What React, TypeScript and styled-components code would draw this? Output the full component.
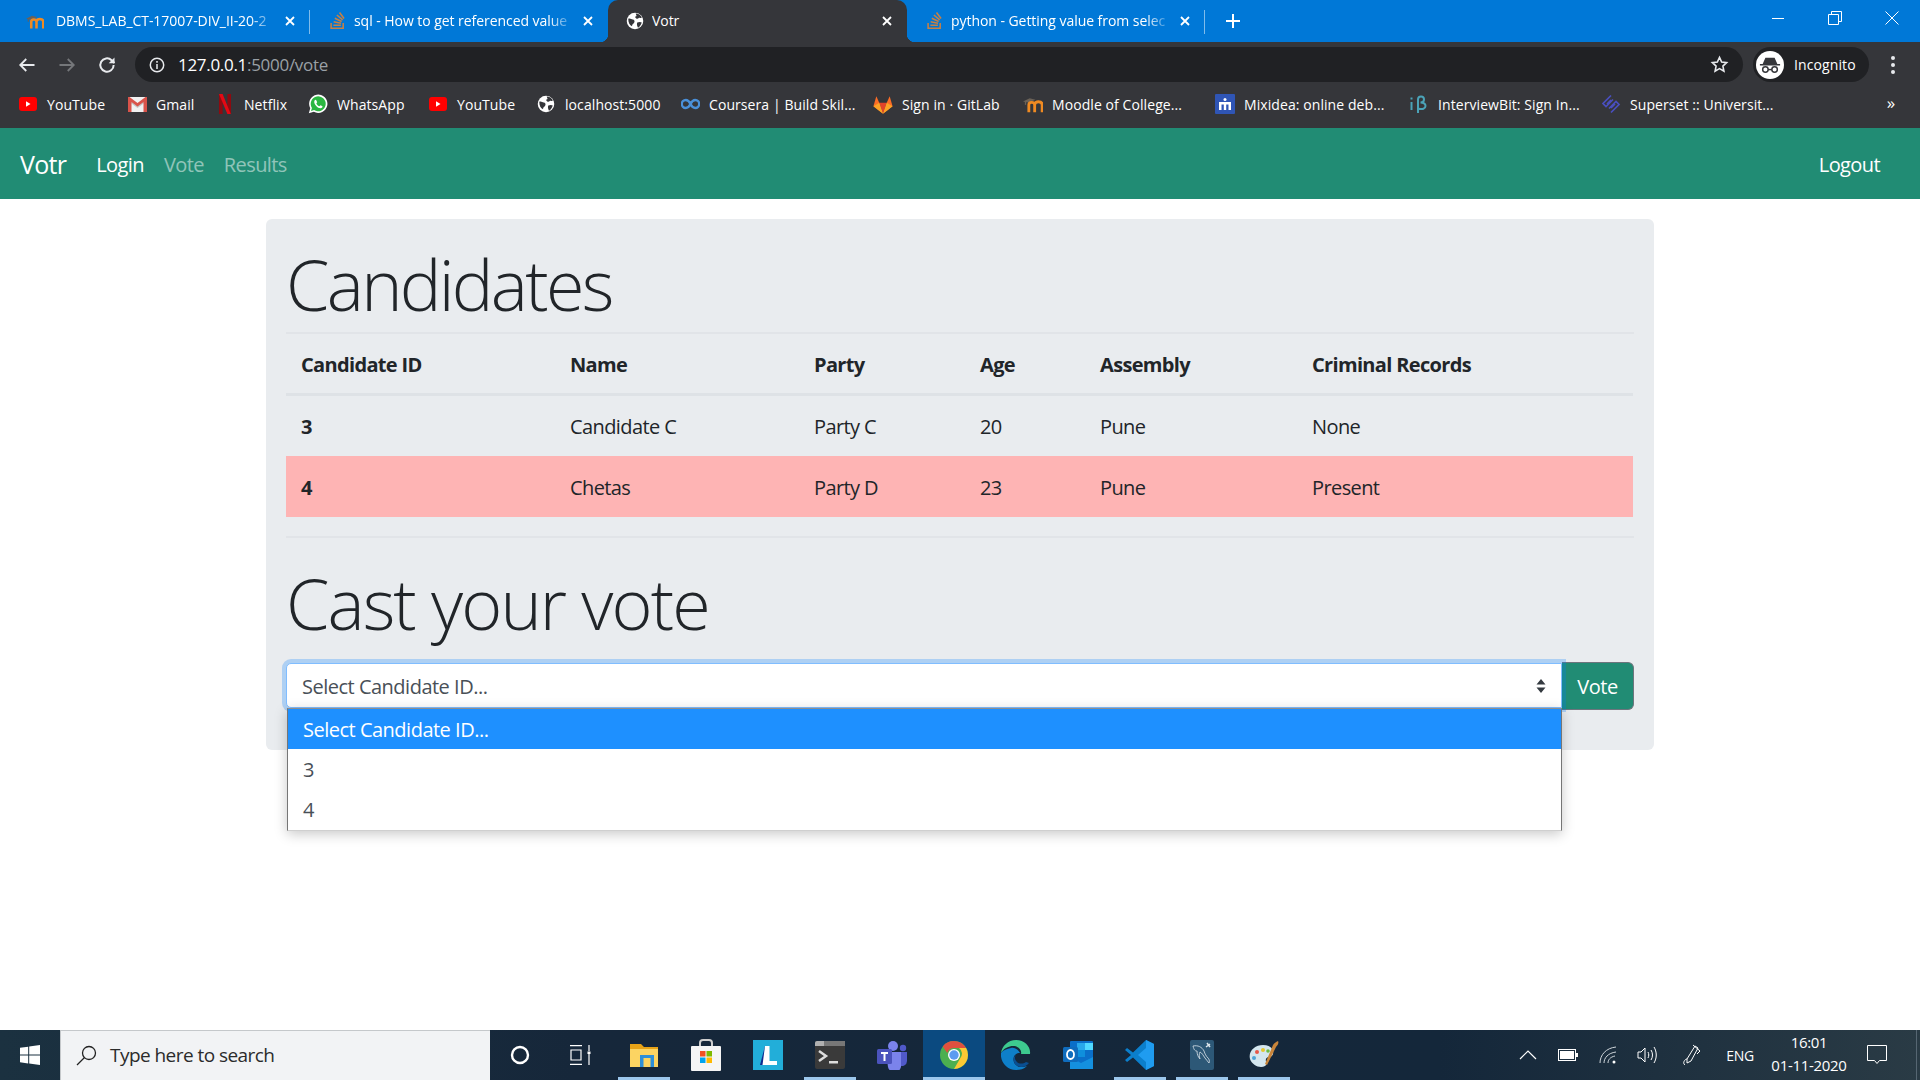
import React from "react";
import styled, { createGlobalStyle } from "styled-components";
import { SiStackoverflow } from "react-icons/si";

const Global = createGlobalStyle`
  html, body { margin: 0; padding: 0; height: 100%; background: #fff; overflow: hidden; }
  * { box-sizing: border-box; }
  body { font-family: "Open Sans", "Noto Sans", "Liberation Sans", sans-serif; }
`;

const Page = styled.div`
  width: 1920px; height: 1080px; display: flex; flex-direction: column; overflow: hidden;
`;
const TitleBar = styled.div`
  height: 42px; background: #0078d7; display: flex; align-items: stretch; padding-left: 12px; color: #fff; flex: none;
`;
const Tab = styled.div<{ $active?: boolean; $sep?: boolean }>`
  width: ${p => (p.$active ? 299 : 298)}px; position: relative; display: flex; align-items: center; gap: 8px;
  padding: 0 12px 1px 18px; font-size: 14px; letter-spacing: -0.05px; color: #fff; flex: none;
  background: ${p => (p.$active ? "#35363a" : "transparent")};
  border-radius: ${p => (p.$active ? "10px 10px 0 0" : "0")};
  ${p => p.$sep && `&::after { content: ""; position: absolute; right: 0; top: 10px; bottom: 8px; width: 1px; background: rgba(255,255,255,.5); }`}
  ${p => p.$active && `
    &::before, &::after { content: ""; position: absolute; bottom: 0; width: 8px; height: 8px; }
    &::before { left: -8px; background: radial-gradient(circle at 0 0, transparent 8px, #35363a 8.5px); }
    &::after { right: -8px; background: radial-gradient(circle at 100% 0, transparent 8px, #35363a 8.5px); }
  `}
`;
const TabIcon = styled.span<{ $nudge?: number }>`
  width: 18px; height: 18px; flex: none; display: flex; align-items: center; justify-content: center;
  ${p => p.$nudge && `transform: translateX(${p.$nudge}px);`}
`;
const TabTitle = styled.span<{ $fade?: boolean }>`
  flex: 1; min-width: 0; white-space: nowrap; overflow: hidden;
  ${p => p.$fade && `mask-image: linear-gradient(to right, #000 88%, transparent 100%);`}
`;
const CloseGlyph = styled.svg`
  width: 10px; height: 10px; flex: none; margin-right: 3px; stroke: #fff; stroke-width: 1.8; fill: none;
`;
const NewTab = styled.div`
  width: 56px; display: flex; align-items: center; justify-content: center;
`;
const WindowControls = styled.div`
  margin-left: auto; display: flex; align-items: flex-start;
`;
const WinButton = styled.div`
  width: 57px; height: 36px; display: flex; align-items: center; justify-content: center;
  svg { stroke: #fff; fill: none; stroke-width: 1; }
`;

const Toolbar = styled.div`
  height: 45px; background: #35363a; display: flex; align-items: flex-start; padding: 5px 0 0 0; flex: none;
`;
const NavIcon = styled.div`
  width: 40px; height: 35px; display: flex; align-items: center; justify-content: center; flex: none;
`;
const NavGroup = styled.div`
  display: flex; padding-left: 7px; width: 135px;
`;
const Omnibox = styled.div`
  width: 1608px; height: 35px; background: #202124; border-radius: 18px; display: flex; align-items: center;
  padding: 0 14px 0 14px; color: #fff; font-size: 17px; letter-spacing: -0.3px; flex: none;
`;
const Host = styled.span`color: #fff;`;
const UrlPath = styled.span`color: #9aa0a6;`;
const OmniInfo = styled.span`
  width: 18px; height: 18px; margin-right: 11px; display: flex;
`;
const StarWrap = styled.span`margin-left: auto; display: flex; margin-right: 0;`;
const Incognito = styled.div`
  margin-left: 10px; width: 116px; height: 35px; border-radius: 18px; background: #202124; display: flex; align-items: center;
  padding-left: 3px; gap: 10px; color: #fff; font-size: 14px; letter-spacing: 0.1px; flex: none;
`;
const Avatar = styled.div`
  width: 28px; height: 28px; border-radius: 50%; background: #fff; display: flex; align-items: center; justify-content: center;
`;
const MenuDots = styled.div`
  width: 47px; display: flex; flex-direction: column; align-items: center; justify-content: center; gap: 3px; height: 35px;
  span { width: 4px; height: 4px; background: #e8eaed; border-radius: 50%; }
`;

const Bookmarks = styled.div`
  height: 41px; background: #35363a; display: flex; align-items: center; padding-left: 18px; color: #fff; font-size: 14px; letter-spacing: 0.08px; flex: none; padding-bottom: 7px;
`;
const Bookmark = styled.div<{ $w: number }>`
  width: ${p => p.$w}px; flex: none; display: flex; align-items: center; gap: 9px; white-space: nowrap;
`;
const BookmarkIcon = styled.span`
  width: 20px; height: 20px; flex: none; display: flex; align-items: center; justify-content: center;
`;
const More = styled.div`
  margin-left: auto; width: 58px; text-align: center; font-size: 17px; padding-bottom: 4px;
`;

const Navbar = styled.nav`
  height: 71px; background: #218c74; display: flex; align-items: center; padding: 0 30px 0 20px; flex: none; border-top: 1px solid #218c74;
`;
const Brand = styled.a`
  color: #fff; font-size: 25px; letter-spacing: -0.7px; margin-right: 20px;
`;
const NavLink = styled.a<{ $on?: boolean }>`
  color: ${p => (p.$on ? "#fff" : "rgba(255,255,255,.5)")}; font-size: 20px; letter-spacing: -0.6px; padding: 0 10px;
`;
const NavRight = styled.div`margin-left: auto;`;

const Main = styled.main`
  flex: 1; min-height: 0; display: flex; flex-direction: column; align-items: center; padding-top: 20px;
`;
const Card = styled.section`
  width: 1388px; height: 531px; background: #e9ecef; border-radius: 6px; padding: 20px; position: relative; color: #212529;
`;
const Display = styled.h1<{ $track: number }>`
  font-size: 70px; font-weight: 300; line-height: 84px; margin: 0; padding-top: 3px; letter-spacing: ${p => p.$track}px; color: #212529;
`;
const Rule = styled.hr<{ $top: number; $bottom: number }>`
  border: 0; height: 2px; background: #e1e4e8; margin: ${p => p.$top}px 0 ${p => p.$bottom}px;
`;
const Table = styled.table`
  width: 1347px; table-layout: fixed; border-collapse: collapse; font-size: 20px; letter-spacing: -0.6px;
`;
const Col = styled.col<{ $w: number }>`width: ${p => p.$w}px;`;
const Th = styled.th`
  height: 60px; padding: 2px 15px 0; text-align: left; font-weight: 700; border-bottom: 3px solid #dee2e6; letter-spacing: -0.66px;
`;
const Tr = styled.tr<{ $danger?: boolean }>`
  background: ${p => (p.$danger ? "#feb4b4" : "transparent")};
  height: ${p => (p.$danger ? 61 : 62)}px;
`;
const Td = styled.td<{ $bold?: boolean }>`
  padding: 2px 15px 0; font-weight: ${p => (p.$bold ? 700 : 400)};
`;
const VoteRow = styled.div`
  display: flex; margin-top: 17px; position: relative; width: 1348px;
`;
const SelectBox = styled.div`
  width: 1276px; height: 45px; margin-top: 1px; background: #fff; border: 1px solid #80bdff; border-radius: 5px 0 0 5px;
  box-shadow: 0 0 0 4px rgba(0,123,255,.25); display: flex; align-items: center; padding: 1px 15px 0 15px; font-size: 20px; letter-spacing: -0.5px; color: #495057;
  position: relative; z-index: 1;
`;
const Arrows = styled.svg`
  margin-left: auto; width: 10px; height: 14px; fill: #343a40;
`;
const VoteButton = styled.button`
  width: 72px; height: 48px; background: #218c74; color: #fff; font-family: inherit; font-size: 20px; letter-spacing: -0.5px; padding: 0;
  border: 1px solid #6c757d; border-left: 0; border-radius: 0 6px 6px 0;
`;
const Dropdown = styled.ul`
  position: absolute; z-index: 3; left: 1px; top: 46px; width: 1275px; margin: 0; padding: 0; list-style: none; background: #fff;
  border: 1px solid #767676; border-top: 1px solid #8e8e8e; border-bottom-color: #cfcfcf; box-shadow: 0 3px 12px rgba(0,0,0,.22); font-size: 20px; letter-spacing: -0.5px;
`;
const Option = styled.li<{ $sel?: boolean }>`
  height: 40.3px; display: flex; align-items: center; padding-left: 15px;
  background: ${p => (p.$sel ? "#1e90ff" : "#fff")}; color: ${p => (p.$sel ? "#fff" : "#495057")};
`;

const Taskbar = styled.footer`
  height: 50px; flex: none; display: flex; align-items: stretch; color: #fff;
  background: linear-gradient(90deg, #1b3140 0%, #16273a 30%, #14273a 75%, #2a3b45 100%);
`;
const StartButton = styled.div`
  width: 60px; display: flex; align-items: center; justify-content: center;
`;
const SearchBox = styled.div`
  width: 430px; margin-right: -1px; background: #f2f3f5; border-top: 1px solid #c5c8cb; border-left: 1px solid #c5c8cb; display: flex; align-items: center; gap: 13px; padding-left: 15px;
  color: #2b2b2b; font-size: 19px; letter-spacing: -0.55px; padding-bottom: 1px;
`;
const TaskItem = styled.div<{ $open?: boolean; $active?: boolean }>`
  width: 62px; flex: none; display: flex; align-items: center; justify-content: center; position: relative;
  background: ${p => (p.$active ? "#0b4a80" : "transparent")};
  ${p => p.$open && `&::after { content: ""; position: absolute; left: ${p.$active ? 0 : 5}px; right: ${p.$active ? 0 : 5}px; bottom: 0; height: 3px; background: #9cc7ec; }`}
`;
const TaskViewIcon = styled.svg`
  margin-right: 5px; fill: none; stroke: #fff; stroke-width: 1.2;
`;
const Tray = styled.div`
  margin-left: auto; display: flex; align-items: center; height: 100%;
`;
const TrayIcon = styled.div<{ $w: number }>`
  width: ${p => p.$w}px; display: flex; align-items: center; justify-content: center; flex: none;
`;
const TrayText = styled.div`
  font-size: 14px; letter-spacing: -0.3px; width: 48px; text-align: center; color: #fff;
`;
const Clock = styled.div`
  width: 90px; text-align: center; font-size: 15px; letter-spacing: -0.3px; line-height: 23px; padding-bottom: 2px;
`;
const EdgeSep = styled.div`width: 4px; height: 100%; border-left: 1px solid #566672; margin-left: 16px;`;

/* ---- drawings ---- */
const Close = () => <CloseGlyph viewBox="0 0 10 10"><path d="M1 1l8 8M9 1l-8 8" /></CloseGlyph>;
const Globe = ({ s = 18, bg = "#fff", fg = "#35363a" }: { s?: number; bg?: string; fg?: string }) => (
  <svg width={s} height={s} viewBox="0 0 24 24">
    <circle cx="12" cy="12" r="11" fill={bg} />
    <path d="M3 9c3-1 4 1 6 1s3 2 2 4-3 2-3 5c-3-1-5-5-5-10zM13 2c4 0 7 2 8 6-2 0-3-1-4 0s-2 2-4 0 1-2 1-3-1-2-1-3zM15 14c2-1 5-1 6 0-1 3-3 6-5 7-1-2-2-5-1-7z" fill={fg} />
  </svg>
);
const Yt = () => (
  <svg width="18" height="14" viewBox="0 0 18 14"><rect width="18" height="14" rx="3" fill="#f00" /><path d="M7 4.2l4.5 2.8L7 9.8z" fill="#fff" /></svg>
);
const Gmail = () => (
  <svg width="19" height="15" viewBox="0 0 19 15">
    <rect width="19" height="15" fill="#f1f1f1" />
    <path d="M0 1l9.5 7L19 1v3l-9.5 7L0 4z" fill="#c5c5c5" />
    <path d="M0 0h1.5l8 6 8-6H19v15h-3.5V5l-6 4.5-6-4.5v10H0z" fill="#d9534a" />
  </svg>
);
const Netflix = () => (
  <svg width="14" height="20" viewBox="0 0 14 20">
    <path d="M1 0h3.6v20L1 20.6z" fill="#8e0a10" /><path d="M9.4 0H13v20.6l-3.6-.6z" fill="#8e0a10" />
    <path d="M1 0h3.6L13 20.6l-3.6-.6z" fill="#e50914" />
  </svg>
);
const Whats = () => (
  <svg width="20" height="20" viewBox="0 0 24 24">
    <path d="M1 23l1.7-6A11 11 0 1 1 7 21.3z" fill="#fff" />
    <path d="M3.6 20.4l1.1-3.7A9 9 0 1 1 7.3 19.3z" fill="#2bb741" />
    <path d="M9 7c-.5 0-1.5.8-1.5 2.5 0 3 4 7.5 7.5 7.5 1.7 0 2.6-1.2 2.5-2-.1-.5-2.2-1.6-2.5-1.5-.5.1-.9 1.2-1.3 1.2-1 0-3.6-2.4-3.6-3.4 0-.4.9-.8.9-1.3C10.9 9.7 10 7 9 7z" fill="#fff" />
  </svg>
);
const Coursera = () => (
  <svg width="19" height="12" viewBox="0 0 24 14" fill="none" stroke="#4a90d9" strokeWidth="3">
    <path d="M12 7C10 3 8 2 6 2a5 5 0 0 0 0 10c2 0 4-1 6-5zM12 7c2 4 4 5 6 5a5 5 0 0 0 0-10c-2 0-4 1-6 5z" />
  </svg>
);
const Gitlab = () => (
  <svg width="20" height="19" viewBox="0 0 24 22">
    <path d="M12 22L.5 13 4 1l3.5 8z" fill="#fc6d26" /><path d="M12 22l11.5-9L20 1l-3.500 8z" fill="#fc6d26" />
    <path d="M12 22L7.500 9h9z" fill="#e24329" /><path d="M.5 13L7.500 9 12 22z" fill="#fca326" /><path d="M23.500 13l-7-4L12 22z" fill="#fca326" />
  </svg>
);
const Mixidea = () => (
  <svg width="20" height="20" viewBox="0 0 20 20">
    <rect width="20" height="20" rx="1" fill="#2f55b5" />
    <path d="M4 16V8h12v8h-2.500V10.500H11.200V16H8.800v-5.500H6.500V16z" fill="#fff" /><circle cx="10" cy="5.500" r="1.500" fill="#fff" />
  </svg>
);
const Ib = () => (
  <svg width="20" height="20" viewBox="0 0 20 20" fill="none" stroke="#4ba3b8" strokeWidth="2">
    <path d="M2.500 8v8" /><path d="M1.500 4.500h2" /><path d="M9 19V5.500a3 3 0 0 1 6 0c0 2-1.500 3-3.500 3 3 0 5 1 5 3.500s-3 4-7.500 2.500" />
  </svg>
);
const Superset = () => (
  <svg width="20" height="20" viewBox="0 0 20 20" fill="none" stroke="#4a4fc0" strokeWidth="1.700">
    <path d="M10 1.500L2 9.500l3 3 7-7M10 18.500l8-8-3-3-7 7M6 10l4-4M10 14l4-4" />
  </svg>
);
const Moodle = ({ s = 20 }: { s?: number }) => (
  <svg width={s} height={s} viewBox="0 0 24 24" fill="none">
    <path d="M0 9l8-4 7 2-8 3.500z" fill="#6b6258" />
    <path d="M3 9v4" stroke="#6b6258" strokeWidth="1.500" />
    <path d="M7 22v-9c0-4 7-4 7 0v9M14 22v-9c0-5 9-5 9 0v9" stroke="#ef8a22" strokeWidth="3.400" />
  </svg>
);
const So = () => <SiStackoverflow size={17} color="#c98043" />;

const ChromeLogo = () => (
  <svg width="28" height="28" viewBox="0 0 28 28">
    <circle cx="14" cy="14" r="14" fill="#4caf50" />
    <path d="M14 0a14 14 0 0 1 12.100 7H14a7 7 0 0 0-6.700 5L2.700 5.500A14 14 0 0 1 14 0z" fill="#e0503f" />
    <path d="M26.100 7A14 14 0 0 1 14 28l6.100-10.500A7 7 0 0 0 19 7z" fill="#fcc934" />
    <circle cx="14" cy="14" r="6" fill="#fff" /><circle cx="14" cy="14" r="4.700" fill="#5c9bf1" />
  </svg>
);
const EdgeLogo = () => (
  <svg width="30" height="30" viewBox="0 0 30 30">
    <path d="M15 0C7 0 1 6 0 13c3-5 8-7 12-7 6 0 9 4 8 8h9c1-7-5-14-14-14z" fill="#3dca8f" />
    <path d="M0 13c-1 9 6 17 15 17 4 0 8-1 11-4-5 2-10 1-12-2-2-3-2-7 0-9 1-1 2-2 5-2-2-4-6-6-9-5C6 9 2 10 0 13z" fill="#0e7fc9" />
    <path d="M14 24c3 4 10 4 14-1l-3-1c-3 2-7 2-9 0-2-2-3-4-1-7-3 2-3 6-1 9z" fill="#0a4f92" />
  </svg>
);
const Outlook = () => (
  <svg width="30" height="30" viewBox="0 0 30 30">
    <rect x="7" y="1" width="23" height="28" rx="1" fill="#0a6fc9" /><rect x="14" y="3" width="8" height="7" fill="#28a8ea" /><rect x="22" y="3" width="8" height="7" fill="#50d9ff" />
    <rect x="14" y="10" width="8" height="7" fill="#0f8fdc" /><path d="M7 17l11 6 12-6v12H7z" fill="#1490df" />
    <rect y="7" width="15" height="15" rx="1.500" fill="#0f6cbd" /><ellipse cx="7.500" cy="14.500" rx="3.500" ry="4.500" fill="none" stroke="#fff" strokeWidth="1.800" />
  </svg>
);
const VsCode = () => (
  <svg width="30" height="30" viewBox="0 0 30 30">
    <path d="M21 0l8 4v22l-8 4-13-12.500L2 22l-2-2 6-5-6-5 2-2 6 4.500z" fill="#0b7fcc" />
    <path d="M21 0l8 4v22l-8 4zM21 8l-8 7 8 7z" fill="#1f9cf0" fillRule="evenodd" />
  </svg>
);
const Teams = () => (
  <svg width="30" height="30" viewBox="0 0 30 30">
    <circle cx="16" cy="6" r="5" fill="#7b83eb" /><circle cx="26" cy="8" r="3.200" fill="#5059c9" />
    <path d="M21 12h9v9a5 5 0 0 1-8 4z" fill="#5059c9" /><path d="M9 12h15v12a6.500 6.500 0 0 1-13 3z" fill="#7b83eb" />
    <rect y="9" width="15" height="15" rx="1.500" fill="#4b53bc" /><path d="M4 13h7M7.500 13v8" stroke="#fff" strokeWidth="2" />
  </svg>
);
const Terminal = () => (
  <svg width="30" height="28" viewBox="0 0 30 28">
    <rect width="30" height="28" rx="2" fill="#3a3a3a" /><path d="M0 2a2 2 0 0 1 2-2h26a2 2 0 0 1 2 2v3H0z" fill="#b0b0b0" /><rect x="9" width="21" height="5" fill="#777" />
    <path d="M4 10l7 5-7 5" fill="none" stroke="#ddd" strokeWidth="2.500" /><rect x="14" y="20" width="9" height="2.500" fill="#ddd" />
  </svg>
);
const Store = () => (
  <svg width="30" height="32" viewBox="0 0 30 32">
    <path d="M9 8V4a3 3 0 0 1 3-3h6a3 3 0 0 1 3 3v4" fill="none" stroke="#cfcfcf" strokeWidth="2" />
    <rect y="7" width="30" height="25" rx="1" fill="#f5f5f5" />
    <rect x="9" y="12" width="5.500" height="5.500" fill="#f25022" /><rect x="15.500" y="12" width="5.500" height="5.500" fill="#7fba00" />
    <rect x="9" y="18.500" width="5.500" height="5.500" fill="#00a4ef" /><rect x="15.500" y="18.500" width="5.500" height="5.500" fill="#ffb900" />
  </svg>
);
const Explorer = () => (
  <svg width="30" height="28" viewBox="0 0 30 28">
    <path d="M1 3h11l3 3h14v20H1z" fill="#e8a317" /><rect x="1" y="8" width="28" height="18" fill="#fcd462" />
    <rect x="11" y="14" width="14" height="3" fill="#2e8fd8" /><rect x="11" y="14" width="3.500" height="12" fill="#2e8fd8" /><rect x="21.500" y="14" width="3.500" height="12" fill="#2e8fd8" />
  </svg>
);
const LApp = () => (
  <svg width="30" height="30" viewBox="0 0 30 30">
    <rect width="30" height="30" fill="#22aed9" /><path d="M7 25l5-19v19z" fill="#0c2a8f" /><path d="M12 6h4.500v15H24v4H9.500z" fill="#fff" />
  </svg>
);
const MysqlApp = () => (
  <svg width="30" height="30" viewBox="0 0 30 30">
    <rect width="24" height="30" x="3" rx="2" fill="#2d5877" />
    <path d="M6 6c5-1 9 1 11 5 1 3 2 5 4 7 1 1 2 3 1 5-1-2-3-3-4-5-2-3-3-5-5-6-1 2-1 4 0 7-2-2-3-5-3-8-2 0-3-1-4-5z" fill="none" stroke="#c9d6e0" strokeWidth=".9" />
    <path d="M20 3l3 4M23 4l-4 3" stroke="#dde6ec" strokeWidth="1.500" />
  </svg>
);
const Palette = () => (
  <svg width="32" height="30" viewBox="0 0 32 30">
    <path d="M2 19C0 11 7 5 15 5c8 0 11 5 10 9-1 4-6 2-7 5-1 3 2 5-1 7-5 3-13-1-15-7z" fill="#d4e6ee" />
    <circle cx="9" cy="12" r="2" fill="#e7584a" /><circle cx="15" cy="10" r="2" fill="#e6c72f" /><circle cx="6" cy="18" r="2" fill="#4ea4d8" /><circle cx="20" cy="11" r="1.800" fill="#6cbb45" />
    <path d="M30 1c1 2 0 4-2 6L19 25l-2-1 8-19c1-2 3-3 5-4z" fill="#c9853a" />
  </svg>
);

const bookmarks = [
  { w: 109, icon: <Yt />, label: "YouTube" },
  { w: 88, icon: <Gmail />, label: "Gmail" },
  { w: 93, icon: <Netflix />, label: "Netflix" },
  { w: 120, icon: <Whats />, label: "WhatsApp" },
  { w: 108, icon: <Yt />, label: "YouTube" },
  { w: 144, icon: <Globe />, label: "localhost:5000" },
  { w: 193, icon: <Coursera />, label: "Coursera | Build Skil..." },
  { w: 150, icon: <Gitlab />, label: "Sign in · GitLab" },
  { w: 192, icon: <Moodle />, label: "Moodle of College..." },
  { w: 194, icon: <Mixidea />, label: "Mixidea: online deb..." },
  { w: 192, icon: <Ib />, label: "InterviewBit: Sign In..." },
  { w: 200, icon: <Superset />, label: "Superset :: Universit..." },
];

const headers = ["Candidate ID", "Name", "Party", "Age", "Assembly", "Criminal Records"];
const widths = [269, 244, 166, 120, 212, 336];
const rows = [
  { cells: ["3", "Candidate C", "Party C", "20", "Pune", "None"], danger: false },
  { cells: ["4", "Chetas", "Party D", "23", "Pune", "Present"], danger: true },
];

export default function App() {
  return (
    <Page>
      <Global />
      <TitleBar>
        <Tab $sep>
          <TabIcon $nudge={-4}><Moodle s={20} /></TabIcon>
          <TabTitle $fade>DBMS_LAB_CT-17007-DIV_II-20-2</TabTitle>
          <Close />
        </Tab>
        <Tab>
          <TabIcon><So /></TabIcon>
          <TabTitle $fade>sql - How to get referenced value</TabTitle>
          <Close />
        </Tab>
        <Tab $active>
          <TabIcon><Globe /></TabIcon>
          <TabTitle>Votr</TabTitle>
          <Close />
        </Tab>
        <Tab $sep>
          <TabIcon><So /></TabIcon>
          <TabTitle $fade>python - Getting value from selec</TabTitle>
          <Close />
        </Tab>
        <NewTab>
          <svg width="16" height="16" viewBox="0 0 16 16"><path d="M8 1v14M1 8h14" stroke="#fff" strokeWidth="2" /></svg>
        </NewTab>
        <WindowControls>
          <WinButton><svg width="14" height="14" viewBox="0 0 14 14"><path d="M1 7.500h12" /></svg></WinButton>
          <WinButton><svg width="14" height="14" viewBox="0 0 14 14"><path d="M.5 3.500h10v10H.5zM3.500 3.500v-3h10v10h-3" /></svg></WinButton>
          <WinButton><svg width="14" height="14" viewBox="0 0 14 14"><path d="M.5.5l13 13M13.500.5l-13 13" /></svg></WinButton>
        </WindowControls>
      </TitleBar>

      <Toolbar>
        <NavGroup>
          <NavIcon><svg width="18" height="18" viewBox="0 0 24 24" fill="none" stroke="#e8eaed" strokeWidth="2.400"><path d="M22 12H3M11 4l-8 8 8 8" /></svg></NavIcon>
          <NavIcon><svg width="18" height="18" viewBox="0 0 24 24" fill="none" stroke="#75777a" strokeWidth="2.400"><path d="M2 12h19M13 4l8 8-8 8" /></svg></NavIcon>
          <NavIcon><svg width="20" height="20" viewBox="0 0 24 24" fill="none" stroke="#e8eaed" strokeWidth="2.400"><path d="M20 12a8 8 0 1 1-2.500-5.800L21 9.500" /><path d="M21 3v7h-7" fill="#e8eaed" stroke="none" /></svg></NavIcon>
        </NavGroup>
        <Omnibox>
          <OmniInfo>
            <svg width="16" height="16" viewBox="0 0 16 16" fill="none" stroke="#e8eaed" strokeWidth="1.500" style={{ marginTop: 1 }}><circle cx="8" cy="8" r="6.700" /><path d="M8 7v5M8 4v1.700" /></svg>
          </OmniInfo>
          <Host>127.0.0.1</Host><UrlPath>:5000/vote</UrlPath>
          <StarWrap>
            <svg width="19" height="19" viewBox="0 0 24 24" fill="none" stroke="#e8eaed" strokeWidth="2"><path d="M12 3l2.700 6 6.300.7-4.700 4.300 1.300 6.500L12 17.200 6.400 20.500 7.700 14 3 9.700 9.300 9z" /></svg>
          </StarWrap>
        </Omnibox>
        <Incognito>
          <Avatar>
            <svg width="22" height="22" viewBox="0 0 24 24"><path d="M4 11l3-7h10l3 7h3v1.500H1V11z" fill="#35363a" /><circle cx="7" cy="17" r="3" fill="none" stroke="#35363a" strokeWidth="1.600" /><circle cx="17" cy="17" r="3" fill="none" stroke="#35363a" strokeWidth="1.600" /><path d="M10 17h4" stroke="#35363a" strokeWidth="1.600" /></svg>
          </Avatar>
          Incognito
        </Incognito>
        <MenuDots><span /><span /><span /></MenuDots>
      </Toolbar>

      <Bookmarks>
        {bookmarks.map((b, i) => (
          <Bookmark key={i} $w={b.w}><BookmarkIcon>{b.icon}</BookmarkIcon><span>{b.label}</span></Bookmark>
        ))}
        <More>»</More>
      </Bookmarks>

      <Navbar>
        <Brand>Votr</Brand>
        <NavLink $on>Login</NavLink>
        <NavLink>Vote</NavLink>
        <NavLink>Results</NavLink>
        <NavRight><NavLink $on>Logout</NavLink></NavRight>
      </Navbar>

      <Main>
        <Card>
          <Display $track={-2.7}>Candidates</Display>
          <Rule $top={6} $bottom={0} />
          <Table>
            <colgroup>{widths.map((w, i) => <Col key={i} $w={w} />)}</colgroup>
            <thead><tr>{headers.map(h => <Th key={h}>{h}</Th>)}</tr></thead>
            <tbody>
              {rows.map(r => (
                <Tr key={r.cells[0]} $danger={r.danger}>
                  {r.cells.map((c, i) => <Td key={i} $bold={i === 0}>{c}</Td>)}
                </Tr>
              ))}
            </tbody>
          </Table>
          <Rule $top={19} $bottom={20} />
          <Display $track={-1.93}>Cast your vote</Display>
          <VoteRow>
            <SelectBox>
              Select Candidate ID...
              <Arrows viewBox="0 0 10 14"><path d="M5 0l4.500 5.500h-9zM5 14l4.500-5.500h-9z" /></Arrows>
            </SelectBox>
            <VoteButton>Vote</VoteButton>
            <Dropdown>
              <Option $sel>Select Candidate ID...</Option>
              <Option>3</Option>
              <Option>4</Option>
            </Dropdown>
          </VoteRow>
        </Card>
      </Main>

      <Taskbar>
        <StartButton>
          <svg width="20" height="20" viewBox="0 0 20 20" fill="#fff"><path d="M0 2.800l8.200-1.100v7.900H0zM9.200 1.500L20 0v9.600H9.200zM0 10.600h8.200v7.900L0 17.300zM9.200 10.600H20V20L9.200 18.600z" /></svg>
        </StartButton>
        <SearchBox>
          <svg width="21" height="21" viewBox="0 0 21 21" fill="none" stroke="#222" strokeWidth="1.300"><circle cx="13" cy="8" r="6.500" /><path d="M8.500 12.500L1 20" /></svg>
          Type here to search
        </SearchBox>
        <TaskItem><svg width="20" height="20" viewBox="0 0 20 20" fill="none" stroke="#fff" strokeWidth="2.400"><circle cx="10" cy="10" r="8" /></svg></TaskItem>
        <TaskItem><TaskViewIcon width="22" height="20" viewBox="0 0 22 20"><path d="M1 .6h12M1 19.400h12M2 5h10v10H2zM20 0v6M20 9v11" /><rect x="18.500" y="6.500" width="3" height="2.500" fill="#fff" stroke="none" /></TaskViewIcon></TaskItem>
        <TaskItem $open><Explorer /></TaskItem>
        <TaskItem><Store /></TaskItem>
        <TaskItem><LApp /></TaskItem>
        <TaskItem $open><Terminal /></TaskItem>
        <TaskItem><Teams /></TaskItem>
        <TaskItem $open $active><ChromeLogo /></TaskItem>
        <TaskItem><EdgeLogo /></TaskItem>
        <TaskItem><Outlook /></TaskItem>
        <TaskItem $open><VsCode /></TaskItem>
        <TaskItem $open><MysqlApp /></TaskItem>
        <TaskItem $open><Palette /></TaskItem>
        <Tray>
          <TrayIcon $w={40}><svg width="18" height="10" viewBox="0 0 18 10" fill="none" stroke="#fff" strokeWidth="1.200"><path d="M1 9l8-8 8 8" /></svg></TrayIcon>
          <TrayIcon $w={40}><svg width="20" height="12" viewBox="0 0 20 12"><rect x=".5" y=".5" width="17" height="11" fill="none" stroke="#fff" /><rect x="2" y="2" width="14" height="8" fill="#fff" /><rect x="18" y="4" width="2" height="4" fill="#fff" /></svg></TrayIcon>
          <TrayIcon $w={40}><svg width="18" height="18" viewBox="0 0 18 18" fill="none" stroke="#cfd6db" strokeWidth="1"><path d="M1 17C1 9 7 2 17 1M5 17c0-5 4-10 12-11M9 17c0-3 2-6 7-7" /><circle cx="15" cy="16" r="1.500" fill="#fff" stroke="none" /></svg></TrayIcon>
          <TrayIcon $w={40}><svg width="22" height="18" viewBox="0 0 22 18" fill="none" stroke="#fff" strokeWidth="1"><path d="M1 6h3l4-4v14l-4-4H1zM11 6c1 2 1 4 0 6M14 4c2 3 2 7 0 10M17 1c3 5 3 11 0 16" /></svg></TrayIcon>
          <TrayIcon $w={48}><svg width="20" height="22" viewBox="0 0 20 22" fill="none" stroke="#fff" strokeWidth="1"><path d="M3 21c-3-2 0-6 2-6M5 15L13 2l3 2-7 13-4 2zM11 1l7 6-3 3" /></svg></TrayIcon>
          <TrayText>ENG</TrayText>
          <Clock>16:01<br />01-11-2020</Clock>
          <TrayIcon $w={46}><svg width="20" height="20" viewBox="0 0 20 20" fill="none" stroke="#fff" strokeWidth="1"><path d="M.5 .5h19v15h-7l-2.500 3-2.500-3h-7z" /></svg></TrayIcon>
          <EdgeSep />
        </Tray>
      </Taskbar>
    </Page>
  );
}
